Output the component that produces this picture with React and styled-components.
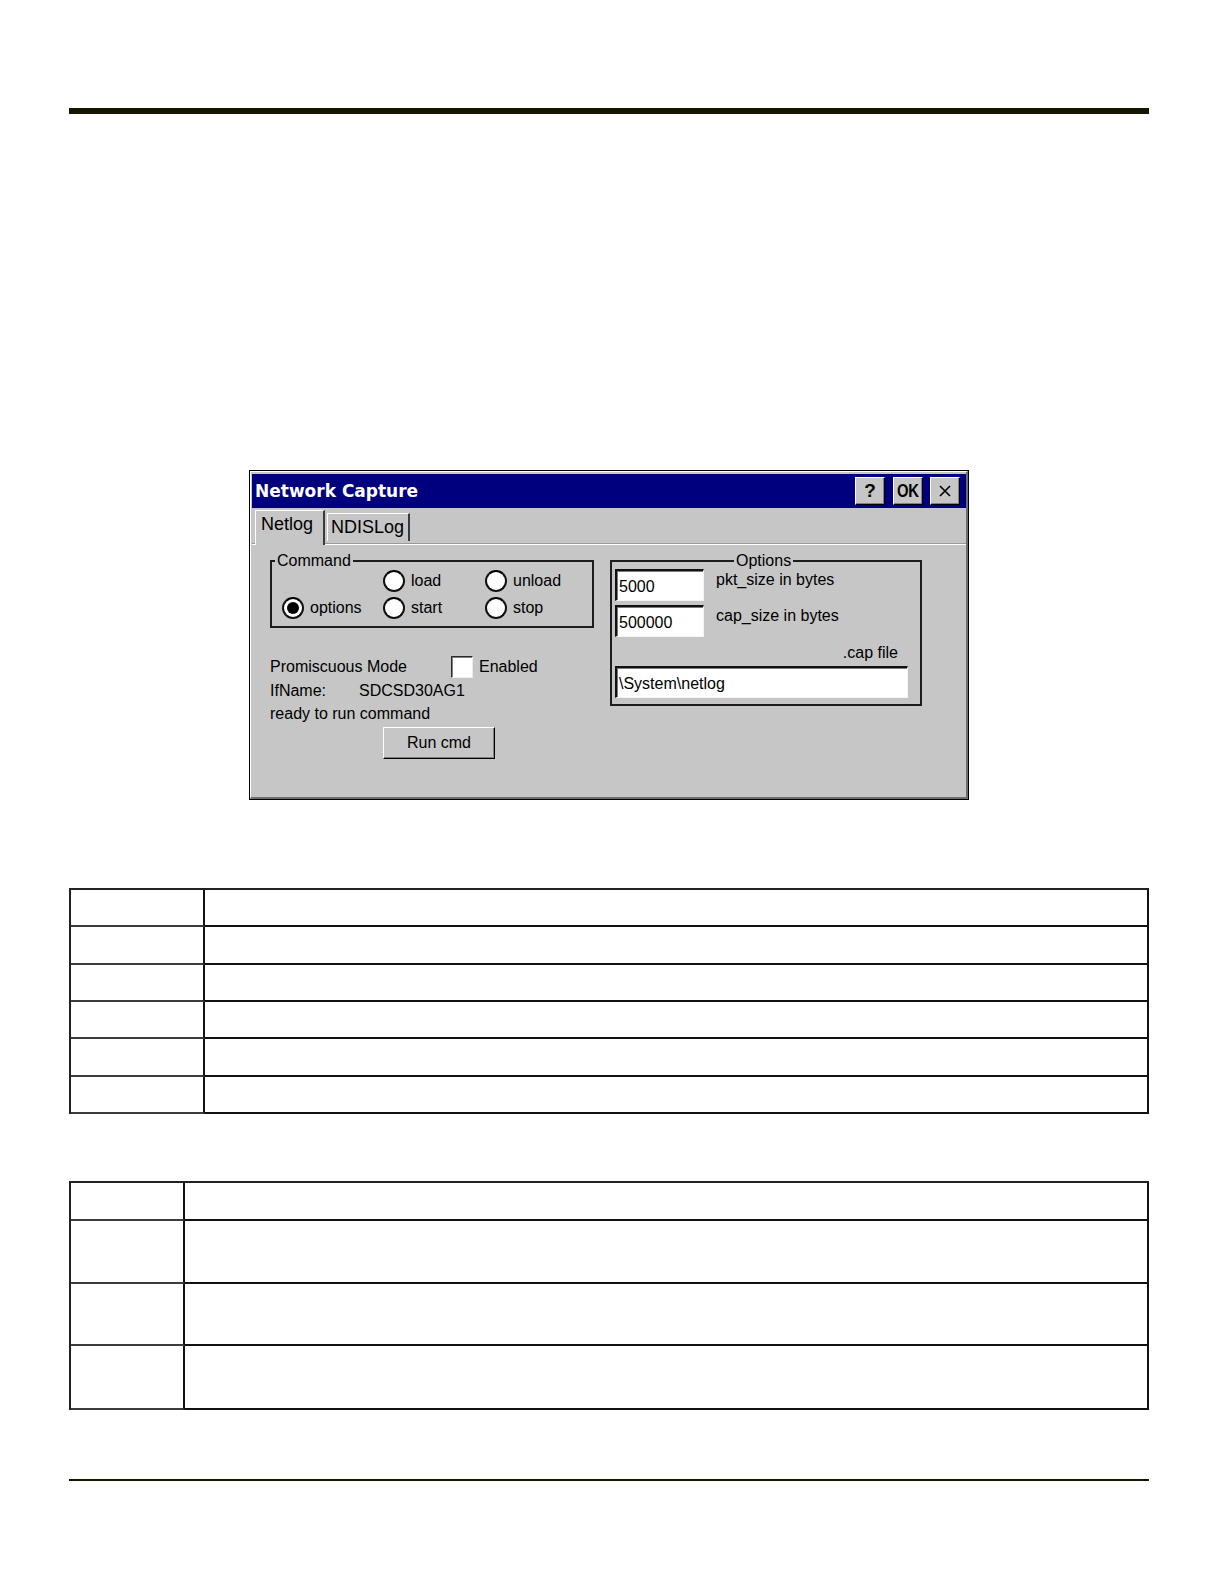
import React from 'react';
import styled, { createGlobalStyle } from 'styled-components';

const GlobalStyle = createGlobalStyle`
  html, body {
    margin: 0;
    padding: 0;
    background: #fff;
  }
  body {
    font-family: "Liberation Sans", Arial, sans-serif;
    color: #000;
  }
`;

const GRAY = '#c6c6c6';

const Page = styled.div`
  width: 1224px;
  min-height: 1584px;
  box-sizing: border-box;
  padding: 108px 75px 0 69px;
`;

const Rule = styled.div`
  height: ${(p) => p.$size}px;
  margin-top: ${(p) => p.$gap || 0}px;
  background: #151500;
`;

const DialogRow = styled.div`
  display: flex;
  justify-content: center;
  margin-top: 356px;
`;

const Window = styled.div`
  width: 720px;
  height: 330px;
  box-sizing: border-box;
  border: 1px solid #000;
  background: ${GRAY};
  display: flex;
  flex-direction: column;
`;

const Frame = styled.div`
  flex: 1;
  display: flex;
  flex-direction: column;
  border-style: solid;
  border-width: 1px 2px 2px 1px;
  border-color: #fff #6e6e6e #6e6e6e #fff;
  padding: 2px 0 0 1px;
`;

const TitleBar = styled.div`
  height: 34px;
  flex-shrink: 0;
  background: #00007f;
  display: flex;
  align-items: center;
  padding: 0 6px 0 3px;
`;

const Title = styled.span`
  color: #fff;
  font-family: "DejaVu Sans", Verdana, sans-serif;
  font-weight: bold;
  font-size: 17px;
`;

const CaptionButtons = styled.div`
  margin-left: auto;
  display: flex;
  gap: 7px;
`;

const CaptionButton = styled.div`
  width: 30px;
  height: 28px;
  box-sizing: border-box;
  background: ${GRAY};
  border-style: solid;
  border-width: 1px;
  border-color: #fff #000 #000 #fff;
  box-shadow: inset -1px -1px 0 #808080;
  display: flex;
  align-items: center;
  justify-content: center;
  font-weight: bold;
  font-size: 19px;
  margin-left: ${(p) => p.$gap || 0}px;
`;

const Condensed = styled.span`
  display: inline-block;
  transform: scaleX(0.78);
  letter-spacing: -0.5px;
`;

const TabStrip = styled.div`
  height: 37px;
  flex-shrink: 0;
  box-sizing: border-box;
  display: flex;
  align-items: flex-end;
  padding-left: 3px;
  border-bottom: 1px solid #fff;
  box-shadow: inset 0 -1px 0 #9a9a9a;
`;

const Tab = styled.div`
  box-sizing: border-box;
  width: ${(p) => p.$w}px;
  height: ${(p) => (p.$active ? 35 : 28)}px;
  margin-bottom: ${(p) => (p.$active ? -1 : 3)}px;
  margin-right: 2px;
  padding: 3px 0 0 ${(p) => (p.$active ? 5 : 3)}px;
  border-style: solid;
  border-width: 1px 2px 0 1px;
  border-color: #fff #3a3a3a #fff #fff;
  background: ${GRAY};
  font-size: 18px;
  line-height: 20px;
`;

const Panel = styled.div`
  flex: 1;
  display: flex;
  align-items: flex-start;
  gap: 16px;
  padding: 15px 0 0 18px;
  font-size: 16px;
`;

const Column = styled.div`
  width: ${(p) => p.$w}px;
  display: flex;
  flex-direction: column;
`;

const Group = styled.div`
  position: relative;
  box-sizing: border-box;
  width: ${(p) => p.$w}px;
  border: 2px solid #1c1c1c;
`;

const Legend = styled.span`
  position: absolute;
  top: -11px;
  left: ${(p) => p.$left}px;
  padding: 0 2px;
  background: ${GRAY};
  line-height: 20px;
`;

const RadioGrid = styled.div`
  display: grid;
  grid-template-columns: 101px 102px auto;
  row-gap: 5px;
  padding: 8px 0 7px 10px;
`;

const RadioItem = styled.div`
  display: flex;
  align-items: center;
  gap: 6px;
  height: 22px;
`;

const RadioCircle = styled.span`
  width: 22px;
  height: 22px;
  box-sizing: border-box;
  border-radius: 50%;
  border: 2px solid #111;
  border-top-color: #000;
  background: #fff;
  display: flex;
  align-items: center;
  justify-content: center;

  &::after {
    content: '';
    width: 12px;
    height: 12px;
    border-radius: 50%;
    background: ${(p) => (p.$on ? '#000' : 'transparent')};
  }
`;

const OptionsBody = styled.div`
  padding: 7px 0 6px 3px;
`;

const FieldRow = styled.div`
  display: flex;
  align-items: flex-start;
  gap: 12px;
  margin-top: ${(p) => p.$gap || 0}px;
`;

const FieldLabel = styled.span`
  line-height: 20px;
  margin-top: 1px;
`;

const TextBox = styled.div`
  width: ${(p) => p.$w}px;
  height: 32px;
  box-sizing: border-box;
  background: #fff;
  border-style: solid;
  border-width: 2px 1px 1px 2px;
  border-color: #111 #f4f4f4 #f4f4f4 #111;
  box-shadow: inset 1px 1px 0 #7a7a7a;
  padding: 2px 0 0 2px;
  display: flex;
  align-items: center;
  margin-top: ${(p) => p.$gap || 0}px;
`;

const CapLabel = styled.div`
  text-align: right;
  padding-right: 22px;
  margin-top: 6px;
  line-height: 20px;
`;

const PromRow = styled.div`
  display: flex;
  align-items: center;
  height: 22px;
  margin-top: 28px;
`;

const PromLabel = styled.span`
  width: 181px;
`;

const CheckBox = styled.span`
  width: 22px;
  height: 22px;
  box-sizing: border-box;
  background: #fff;
  border-style: solid;
  border-width: 1px;
  border-color: #2a2a2a #ececec #ececec #2a2a2a;
  box-shadow: inset 1px 1px 0 #808080;
  margin-right: 6px;
`;

const InfoLine = styled.div`
  display: flex;
  line-height: 23px;
  margin-top: ${(p) => p.$gap || 0}px;
`;

const InfoKey = styled.span`
  width: 89px;
`;

const PushButton = styled.div`
  width: 112px;
  height: 32px;
  box-sizing: border-box;
  margin: 2px 0 0 113px;
  background: ${GRAY};
  border-style: solid;
  border-width: 1px;
  border-color: #fff #000 #000 #fff;
  box-shadow: inset -1px -1px 0 #808080;
  display: flex;
  align-items: center;
  justify-content: center;
`;

const TableGrid = styled.div`
  display: grid;
  grid-template-columns: ${(p) => p.$first}px 1fr;
  grid-template-rows: ${(p) => p.$rows};
  margin-top: ${(p) => p.$gap}px;
  border-top: 2px solid #222;
  border-left: 2px solid #222;
`;

const Cell = styled.div`
  border-right: 2px solid #111;
  border-bottom: 2px solid ${(p) => (p.$first ? '#3c3c3c' : '#111')};
`;

const CloseGlyph = () => (
  <svg width="14" height="14" viewBox="0 0 14 14">
    <path d="M2 2 L12 12 M12 2 L2 12" stroke="#000" strokeWidth="1.6" fill="none" />
  </svg>
);

const Radio = ({ label, on }) => (
  <RadioItem>
    <RadioCircle $on={on} />
    <span>{label}</span>
  </RadioItem>
);

const EmptyTable = ({ first, rows, gap }) => (
  <TableGrid $first={first} $rows={rows.map((r) => `${r}px`).join(' ')} $gap={gap}>
    {rows.map((_, i) => (
      <React.Fragment key={i}>
        <Cell $first />
        <Cell />
      </React.Fragment>
    ))}
  </TableGrid>
);

const NetworkCapture = () => (
  <Window>
    <Frame>
      <TitleBar>
        <Title>Network Capture</Title>
        <CaptionButtons>
          <CaptionButton>?</CaptionButton>
          <CaptionButton $gap={1}>
            <Condensed>OK</Condensed>
          </CaptionButton>
          <CaptionButton>
            <CloseGlyph />
          </CaptionButton>
        </CaptionButtons>
      </TitleBar>
      <TabStrip>
        <Tab $w={70} $active>
          Netlog
        </Tab>
        <Tab $w={83}>NDISLog</Tab>
      </TabStrip>
      <Panel>
        <Column $w={324}>
          <Group $w={324}>
            <Legend $left={3}>Command</Legend>
            <RadioGrid>
              <span />
              <Radio label="load" />
              <Radio label="unload" />
              <Radio label="options" on />
              <Radio label="start" />
              <Radio label="stop" />
            </RadioGrid>
          </Group>
          <PromRow>
            <PromLabel>Promiscuous Mode</PromLabel>
            <CheckBox />
            <span>Enabled</span>
          </PromRow>
          <InfoLine $gap={1}>
            <InfoKey>IfName:</InfoKey>
            <span>SDCSD30AG1</span>
          </InfoLine>
          <InfoLine>ready to run command</InfoLine>
          <PushButton>Run cmd</PushButton>
        </Column>
        <Group $w={312}>
          <Legend $left={122}>Options</Legend>
          <OptionsBody>
            <FieldRow>
              <TextBox $w={89}>5000</TextBox>
              <FieldLabel>pkt_size in bytes</FieldLabel>
            </FieldRow>
            <FieldRow $gap={4}>
              <TextBox $w={89}>500000</TextBox>
              <FieldLabel>cap_size in bytes</FieldLabel>
            </FieldRow>
            <CapLabel>.cap file</CapLabel>
            <TextBox $w={293} $gap={3}>
              \System\netlog
            </TextBox>
          </OptionsBody>
        </Group>
      </Panel>
    </Frame>
  </Window>
);

export default function App() {
  return (
    <>
      <GlobalStyle />
      <Page>
        <Rule $size={6} />
        <DialogRow>
          <NetworkCapture />
        </DialogRow>
        <EmptyTable first={134} rows={[37, 38, 37, 37, 38, 37]} gap={88} />
        <EmptyTable first={114} rows={[38, 63, 62, 64]} gap={67} />
        <Rule $size={2} $gap={69} />
      </Page>
    </>
  );
}
